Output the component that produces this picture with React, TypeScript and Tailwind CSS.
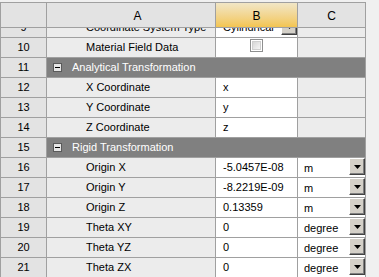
import React from "react";

type Row =
  | { n: number; kind: "section"; label: string }
  | {
      n: number;
      kind: "prop";
      label: string;
      b?: string;
      bDrop?: boolean;
      check?: boolean;
      c?: string;
    };

const rows: Row[] = [
  { n: 9, kind: "prop", label: "Coordinate System Type", b: "Cylindrical", bDrop: true },
  { n: 10, kind: "prop", label: "Material Field Data", check: true },
  { n: 11, kind: "section", label: "Analytical Transformation" },
  { n: 12, kind: "prop", label: "X Coordinate", b: "x" },
  { n: 13, kind: "prop", label: "Y Coordinate", b: "y" },
  { n: 14, kind: "prop", label: "Z Coordinate", b: "z" },
  { n: 15, kind: "section", label: "Rigid Transformation" },
  { n: 16, kind: "prop", label: "Origin X", b: "-5.0457E-08", c: "m" },
  { n: 17, kind: "prop", label: "Origin Y", b: "-8.2219E-09", c: "m" },
  { n: 18, kind: "prop", label: "Origin Z", b: "0.13359", c: "m" },
  { n: 19, kind: "prop", label: "Theta XY", b: "0", c: "degree" },
  { n: 20, kind: "prop", label: "Theta YZ", b: "0", c: "degree" },
  { n: 21, kind: "prop", label: "Theta ZX", b: "0", c: "degree" },
];

function DropButton() {
  return (
    <div className="w-[16px] h-[17px] bg-[#d4d0c8] border border-t-white border-l-white border-r-[#404040] border-b-[#404040] flex items-center justify-center shadow-[inset_-1px_-1px_0_#808080]">
      <svg width="7" height="4" viewBox="0 0 7 4">
        <path d="M0 0H7L3.5 4Z" fill="#000" />
      </svg>
    </div>
  );
}

function CheckBox() {
  return (
    <div className="w-[13px] h-[13px] border border-[#8e8f8f] bg-white p-px mt-[1px]">
      <div className="w-full h-full bg-gradient-to-br from-[#d6d6d6] to-[#f6f6f6] border border-[#cfcfcf]" />
    </div>
  );
}

export default function App() {
  const grid = "grid grid-cols-[45px_168px_81px_67px] gap-px";
  return (
    <div className="w-[379px] h-[277px] overflow-hidden bg-[#f0f0f0] pt-[2px] font-['Liberation_Sans',Arial,sans-serif] text-[11px] text-black">
      <div className="w-[366px] bg-[#a0a0a0] px-px pt-px flex flex-col gap-px">
        {/* header */}
        <div className={grid + " h-[24px]"}>
          <div className="bg-[#e3e3e3]" />
          <div className="bg-[#e3e3e3] flex items-center justify-center pl-[13px] pt-px text-[12px]">A</div>
          <div className="bg-gradient-to-b from-[#f1e6c6] to-[#f3c550] flex items-center justify-center pt-px text-[12px]">B</div>
          <div className="bg-[#e3e3e3] flex items-center justify-center pt-px text-[12px]">C</div>
        </div>
        {/* body */}
        <div className="h-[260px] overflow-hidden">
          <div className={grid + " -mt-[10px] auto-rows-[19px]"}>
            {rows.map((r) =>
              r.kind === "section" ? (
                <React.Fragment key={r.n}>
                  <div className="bg-[#e3e3e3] flex items-center justify-center">{r.n}</div>
                  <div className="col-span-3 bg-[#808080] text-white flex items-center">
                    <div className="ml-[6px] w-[9px] h-[9px] bg-[#e6e6e6] border border-[#5a5a5a] flex items-center justify-center">
                      <div className="w-[5px] h-px bg-black" />
                    </div>
                    <span className="ml-[10px]">{r.label}</span>
                  </div>
                </React.Fragment>
              ) : (
                <React.Fragment key={r.n}>
                  <div className="bg-[#e3e3e3] flex items-center justify-center">{r.n}</div>
                  <div className="bg-[#ececec] flex items-center pl-[39px] whitespace-nowrap">{r.label}</div>
                  {r.check ? (
                    <div className="bg-white flex items-start justify-center">
                      <CheckBox />
                    </div>
                  ) : (
                    <div className="bg-white flex items-start justify-between">
                      <span className="pl-[7px] leading-[19px] whitespace-nowrap">{r.b}</span>
                      {r.bDrop && <DropButton />}
                    </div>
                  )}
                  {r.c ? (
                    <div className="bg-white flex items-start justify-between">
                      <span className="pl-[6px] leading-[19px] pt-px">{r.c}</span>
                      <DropButton />
                    </div>
                  ) : (
                    <div className="bg-[#ececec]" />
                  )}
                </React.Fragment>
              )
            )}
          </div>
        </div>
      </div>
    </div>
  );
}
